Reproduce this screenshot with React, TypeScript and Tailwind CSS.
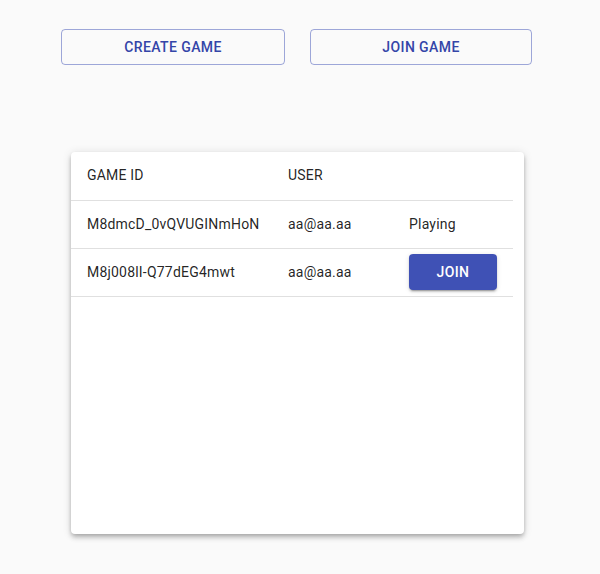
import React from 'react';

type Game = { id: string; user: string; playing: boolean };

const games: Game[] = [
  { id: 'M8dmcD_0vQVUGINmHoN', user: 'aa@aa.aa', playing: true },
  { id: 'M8j008lI-Q77dEG4mwt', user: 'aa@aa.aa', playing: false },
];

const font = { fontFamily: 'Roboto, "Liberation Sans", sans-serif' };

const App: React.FC = () => {
  return (
    <div className="min-h-[574px] w-full bg-[#fafafa] pt-[29px]" style={font}>
      {/* Top actions */}
      <div className="flex gap-[25px] pl-[61px]">
        <button className="h-[36px] w-[224px] rounded-[4px] border border-[rgba(63,81,181,0.5)] text-[14px] font-medium uppercase tracking-[0.4px] text-[#3445a8]">
          Create Game
        </button>
        <button className="h-[36px] w-[222px] rounded-[4px] border border-[rgba(63,81,181,0.5)] text-[14px] font-medium uppercase tracking-[0.4px] text-[#3445a8]">
          Join Game
        </button>
      </div>

      {/* Games list */}
      <div className="ml-[71px] mt-[87px] h-[382px] w-[453px] rounded-[4px] bg-white shadow-[0px_2px_4px_-1px_rgba(0,0,0,0.2),0px_4px_5px_0px_rgba(0,0,0,0.14),0px_1px_10px_0px_rgba(0,0,0,0.12)]">
        <table className="w-[442px] border-collapse text-left text-[14px] text-[rgba(0,0,0,0.87)]">
          <thead>
            <tr className="h-[48px] border-b border-[#e0e0e0]">
              <th className="w-[201px] pl-[16px] font-normal tracking-[0.2px]">GAME ID</th>
              <th className="w-[121px] pl-[16px] font-normal tracking-[0.2px]">USER</th>
              <th className="pl-[16px]"></th>
            </tr>
          </thead>
          <tbody>
            {games.map((g) => (
              <tr key={g.id} className="h-[48px] border-b border-[#e0e0e0]">
                <td className="pl-[16px] tracking-[0.2px]">{g.id}</td>
                <td className="pl-[16px] tracking-[0.2px]">{g.user}</td>
                <td className="pl-[16px]">
                  {g.playing ? (
                    <span className="tracking-[0.2px]">Playing</span>
                  ) : (
                    <button className="h-[36px] w-[88px] rounded-[4px] bg-[#3f51b5] text-[14px] font-medium uppercase tracking-[0.4px] text-white shadow-[0px_3px_1px_-2px_rgba(0,0,0,0.2),0px_2px_2px_0px_rgba(0,0,0,0.14),0px_1px_5px_0px_rgba(0,0,0,0.12)]">
                      Join
                    </button>
                  )}
                </td>
              </tr>
            ))}
          </tbody>
        </table>
      </div>
    </div>
  );
};

export default App;
